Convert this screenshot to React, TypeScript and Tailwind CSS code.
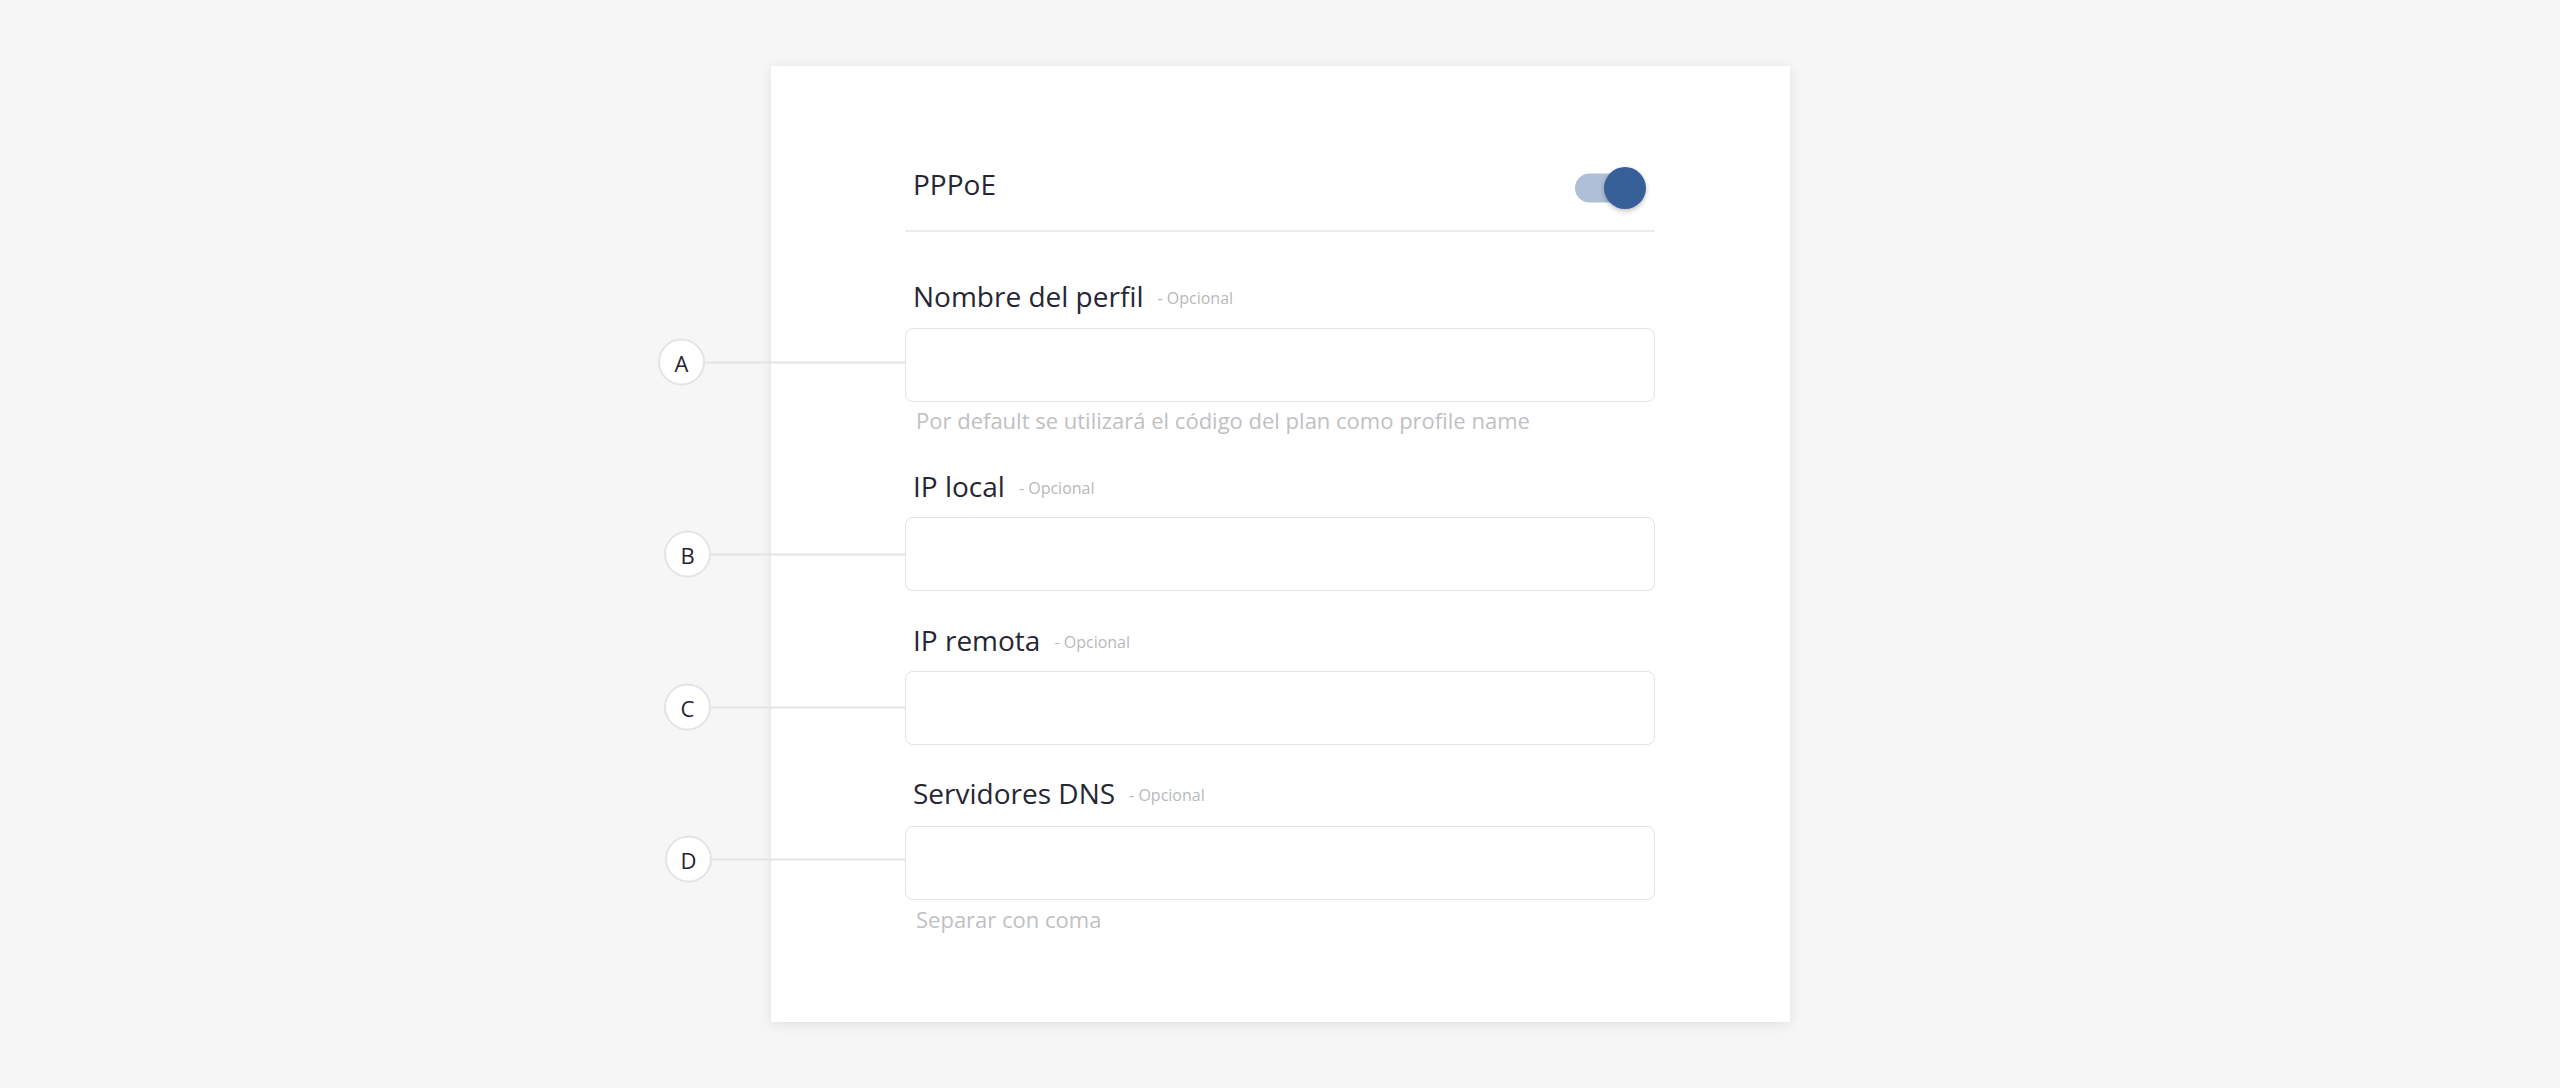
import React from "react";

type Field = {
  label: string;
  letter: string;
  helper?: string;
  helperMt?: string;
  mt: string;
  inputMt: string;
  annTop: string;
  annW: string;
};

const fields: Field[] = [
  {
    label: "Nombre del perfil",
    letter: "A",
    helper: "Por default se utilizará el código del plan como profile name",
    helperMt: "mt-[3px]",
    mt: "mt-[46px]",
    inputMt: "mt-[14px]",
    annTop: "top-[34px]",
    annW: "w-[247px]",
  },
  { label: "IP local", letter: "B", mt: "mt-[33px]", inputMt: "mt-[13px]", annTop: "top-[37px]", annW: "w-[241px]" },
  { label: "IP remota", letter: "C", mt: "mt-[31px]", inputMt: "mt-[13px]", annTop: "top-[36px]", annW: "w-[241px]" },
  {
    label: "Servidores DNS",
    letter: "D",
    helper: "Separar con coma",
    helperMt: "mt-[4px]",
    mt: "mt-[30px]",
    inputMt: "mt-[15px]",
    annTop: "top-[33px]",
    annW: "w-[240px]",
  },
];

function FieldRow({ f }: { f: Field }) {
  return (
    <div className={f.mt}>
      <div className="flex items-baseline pl-[8px]">
        <span className="text-[28px] leading-[36px] text-[#262733]">{f.label}</span>
        <span className="relative -top-[3px] ml-[14px] text-[16px] leading-[20px] text-[#b8b8bb]">- Opcional</span>
      </div>
      <div className={`relative ${f.inputMt}`}>
        <input
          className="block h-[74px] w-full rounded-[8px] border border-[#e2e2e4] bg-white outline-none"
          aria-label={f.label}
        />
        <div
          className={`absolute right-full ${f.annTop} ${f.annW} flex -translate-y-1/2 items-center`}
        >
          <div className="flex h-[47px] w-[47px] shrink-0 items-center justify-center rounded-full border-2 border-[#e4e4e6] bg-white text-[22px] leading-none text-[#23242f]">
            {f.letter}
          </div>
          <div className="h-[2px] flex-1 bg-[#e3e3e5]" />
        </div>
      </div>
      {f.helper && (
        <div className={`${f.helperMt} pl-[11px] text-[22px] leading-[30px] text-[#c0c0c3]`}>
          {f.helper}
        </div>
      )}
    </div>
  );
}

export default function App() {
  return (
    <div
      className="flex min-h-[1088px] w-full justify-center bg-[#f6f6f6] pt-[66px]"
      style={{ fontFamily: '"Open Sans", "Noto Sans", sans-serif' }}
    >
      <div className="h-[956px] w-[1019px] bg-white shadow-[0_2px_12px_rgba(0,0,0,0.09)]">
        <div className="mx-auto w-[750px] pt-[80px]">
          <div className="flex h-[84px] items-center justify-between pl-[8px] pr-[9px]">
            <span className="mb-[8px] text-[28px] text-[#262733]">PPPoE</span>
            <div className="relative h-[42px] w-[71px]">
              <div className="absolute left-0 top-1/2 h-[29px] w-[60px] -translate-y-1/2 rounded-full bg-[#aebfd7]" />
              <div className="absolute right-0 top-0 h-[42px] w-[42px] rounded-full bg-[#386098] shadow-[0_2px_5px_rgba(0,0,0,0.25)]" />
            </div>
          </div>
          <div className="h-[2px] w-full bg-[#ececee]" />
          {fields.map((f) => (
            <FieldRow key={f.letter} f={f} />
          ))}
        </div>
      </div>
    </div>
  );
}
